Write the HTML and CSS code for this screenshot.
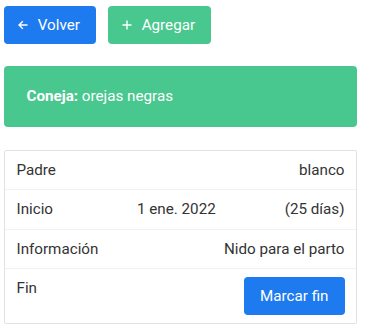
FILE: index.html
```html
<!DOCTYPE html>
<html lang="es">
<head>
<meta charset="utf-8">
<title>Coneja</title>
<link rel="stylesheet" href="styles.css">
</head>
<body>
<div class="page">
  <div class="buttons">
    <a class="btn btn-blue" href="#">
      <span class="icon"><svg width="10" height="10" viewBox="0 0 10 10"><path d="M9.5 5H1M4.8 1.2L1 5l3.8 3.8" fill="none" stroke="#fff" stroke-width="1.4"/></svg></span>
      <span>Volver</span>
    </a>
    <a class="btn btn-green" href="#">
      <span class="icon"><svg width="10" height="10" viewBox="0 0 10 10"><path d="M5 0.5v9M0.5 5h9" fill="none" stroke="#fff" stroke-width="1.4"/></svg></span>
      <span>Agregar</span>
    </a>
  </div>
  <div class="notice"><strong>Coneja:</strong> orejas negras</div>
  <div class="card">
    <div class="row">
      <span class="label">Padre</span>
      <span class="value">blanco</span>
    </div>
    <div class="row row-3">
      <span class="label">Inicio</span>
      <span class="mid">1 ene. 2022</span>
      <span class="value">(25 días)</span>
    </div>
    <div class="row">
      <span class="label">Información</span>
      <span class="value">Nido para el parto</span>
    </div>
    <div class="row row-last">
      <span class="label">Fin</span>
      <a class="btn btn-blue" href="#">Marcar fin</a>
    </div>
  </div>
</div>
</body>
</html>
```

FILE: styles.css
```css
html, body {
  margin: 0;
  padding: 0;
  background: #fff;
}
body {
  font-family: Roboto, "Noto Sans", sans-serif;
  font-size: 15.2px;
  line-height: 22.5px;
  color: #333;
}
.page {
  padding: 6px 16px 10px 4px;
  display: flex;
  flex-direction: column;
  gap: 22.5px;
}
.buttons {
  display: flex;
  gap: 12px;
}
.btn {
  display: inline-flex;
  align-items: center;
  height: 37.5px;
  box-sizing: border-box;
  padding: 0 15px;
  border: 1px solid transparent;
  border-radius: 4px;
  color: #fff;
  text-decoration: none;
  font-size: 15.2px;
}
.btn-blue { background: #1d7bef; }
.btn-green { background: #48c78e; }
.icon {
  width: 22.5px;
  height: 22.5px;
  display: inline-flex;
  align-items: center;
  justify-content: center;
  margin-left: -8.5px;
  margin-right: 3.75px;
}
.notice {
  background: #48c78e;
  color: #fff;
  border-radius: 4px;
  padding: 19px 22.5px 19.5px;
}
.notice strong { font-weight: 700; }
.card {
  border: 1px solid #e2e2e2;
  border-radius: 2px;
  display: flex;
  flex-direction: column;
}
.row {
  display: flex;
  justify-content: space-between;
  align-items: flex-start;
  padding: 8px 11.5px;
  border-bottom: 1px solid #f1f1f1;
}
.row-3 .mid {
  flex: 1;
  padding-left: 84px;
}
.row-last {
  border-bottom: none;
}
.label { color: #333; }
.value { color: #333; }
```
